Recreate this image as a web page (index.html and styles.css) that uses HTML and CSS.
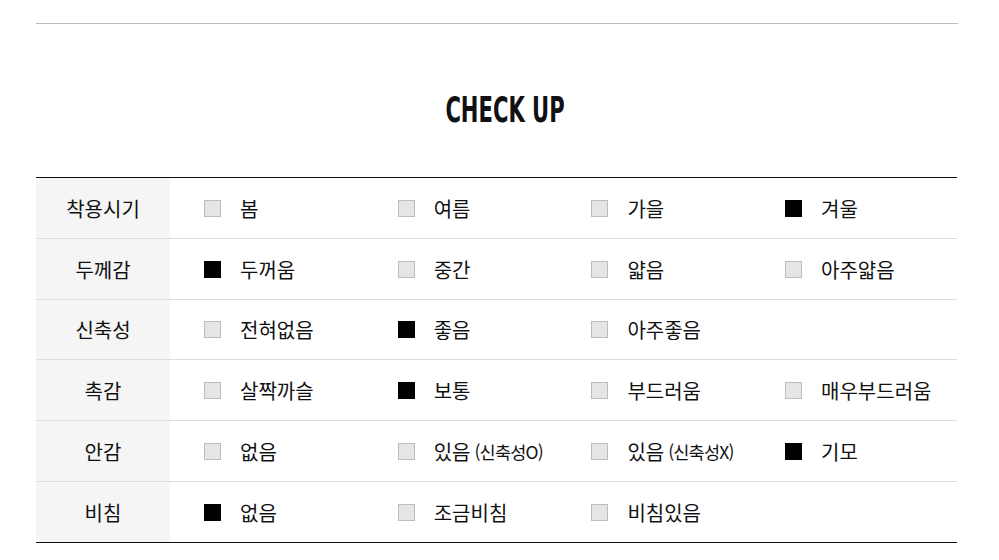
FILE: index.html
```html
<!DOCTYPE html>
<html lang="ko">
<head>
<meta charset="utf-8">
<link rel="stylesheet" href="styles.css">
</head>
<body>
<div class="wrap">
  <div class="topline"></div>
  <h2 class="title"><span>CHECK UP</span></h2>
  <div class="table">
    <div class="row">
      <div class="head">착용시기</div>
      <div class="opts">
        <div class="opt"><i class="box"></i>봄</div>
        <div class="opt"><i class="box"></i>여름</div>
        <div class="opt"><i class="box"></i>가을</div>
        <div class="opt"><i class="box on"></i>겨울</div>
      </div>
    </div>
    <div class="row">
      <div class="head">두께감</div>
      <div class="opts">
        <div class="opt"><i class="box on"></i>두꺼움</div>
        <div class="opt"><i class="box"></i>중간</div>
        <div class="opt"><i class="box"></i>얇음</div>
        <div class="opt"><i class="box"></i>아주얇음</div>
      </div>
    </div>
    <div class="row short">
      <div class="head">신축성</div>
      <div class="opts">
        <div class="opt"><i class="box"></i>전혀없음</div>
        <div class="opt"><i class="box on"></i>좋음</div>
        <div class="opt"><i class="box"></i>아주좋음</div>
      </div>
    </div>
    <div class="row">
      <div class="head">촉감</div>
      <div class="opts">
        <div class="opt"><i class="box"></i>살짝까슬</div>
        <div class="opt"><i class="box on"></i>보통</div>
        <div class="opt"><i class="box"></i>부드러움</div>
        <div class="opt"><i class="box"></i>매우부드러움</div>
      </div>
    </div>
    <div class="row">
      <div class="head">안감</div>
      <div class="opts">
        <div class="opt"><i class="box"></i>없음</div>
        <div class="opt"><i class="box"></i>있음<span class="sub">(신축성O)</span></div>
        <div class="opt"><i class="box"></i>있음<span class="sub">(신축성X)</span></div>
        <div class="opt"><i class="box on"></i>기모</div>
      </div>
    </div>
    <div class="row">
      <div class="head">비침</div>
      <div class="opts">
        <div class="opt"><i class="box on"></i>없음</div>
        <div class="opt"><i class="box"></i>조금비침</div>
        <div class="opt"><i class="box"></i>비침있음</div>
      </div>
    </div>
  </div>
</div>
</body>
</html>
```

FILE: styles.css
```css
html, body {
  margin: 0;
  padding: 0;
  background: #fff;
}
body {
  font-family: "Noto Sans CJK KR", "Noto Sans", sans-serif;
  color: #111;
}
.wrap {
  margin-left: 36px;
  width: 922px;
  padding-top: 23px;
}
.topline {
  height: 0;
  border-top: 1px solid #bbb;
}
.title {
  margin: 66px 0 47px;
  padding-left: 16px;
  height: 40px;
  line-height: 40px;
  text-align: center;
  font-family: "Liberation Sans Narrow", "DejaVu Sans Condensed", sans-serif;
  font-weight: 700;
  font-size: 35px;
  color: #111;
}
.title span {
  display: inline-block;
  transform: scaleX(0.67);
}
.table {
  width: 921px;
  border-top: 1px solid #111;
  border-bottom: 1px solid #111;
}
.row {
  display: flex;
  height: 60px;
}
.row.short {
  height: 59px;
}
.row + .row {
  border-top: 1px solid #ddd;
}
.head {
  width: 134px;
  flex: none;
  background: #f5f5f5;
  display: flex;
  align-items: center;
  justify-content: center;
  font-size: 20px;
}
.opts {
  display: grid;
  grid-template-columns: repeat(4, 193.7px);
  padding-left: 34px;
  align-items: center;
}
.opt {
  display: flex;
  align-items: center;
  font-size: 20px;
  white-space: nowrap;
}
.box {
  width: 15px;
  height: 15px;
  border: 1px solid #bdbdbd;
  background: #e5e5e5;
  margin-right: 19px;
  flex: none;
}
.box.on {
  background: #000;
  border-color: #000;
}
.sub {
  margin-left: 4px;
  font-size: 17.5px;
  letter-spacing: -0.8px;
}
```
